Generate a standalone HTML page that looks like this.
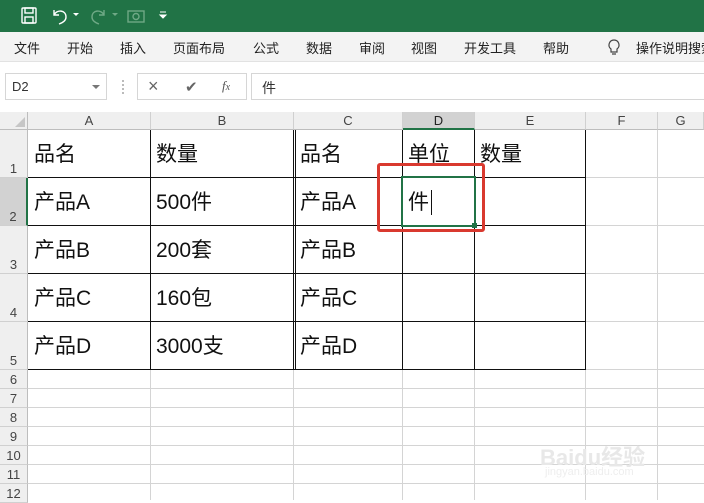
<!DOCTYPE html><html><head><meta charset="utf-8"><style>
*{margin:0;padding:0;box-sizing:border-box}
body{width:704px;height:498px;overflow:hidden;background:#fff;font-family:"Liberation Sans","Noto Sans CJK SC",sans-serif;position:relative}
.a{position:absolute}
.tab{position:absolute;top:38px;font-size:13px;color:#222}
.ch{position:absolute;top:112px;height:18px;font-size:13px;color:#444;text-align:center;line-height:18px;border-right:1px solid #d0d0d0;background:#efefef;border-bottom:1px solid #bdbdbd}
.rh{position:absolute;left:0;width:28px;font-size:13px;color:#444;text-align:center;background:#efefef;border-bottom:1px solid #d0d0d0;border-right:1px solid #bdbdbd;display:flex;align-items:flex-end;justify-content:center;line-height:16px}
.t{position:absolute;font-size:21px;color:#111;line-height:24px}
.vl{position:absolute;width:1px;background:#d4d4d4}
.hl{position:absolute;height:1px;background:#d4d4d4}
.bv{position:absolute;width:1px;background:#111}
.bh{position:absolute;height:1px;background:#111}
</style></head><body>
<div class="a" style="left:0;top:0;width:704px;height:32px;background:#217346"></div>
<svg class="a" style="left:0;top:0" width="180" height="32">
<g fill="none" stroke="#fff" stroke-width="1.4">
<rect x="22" y="8" width="14" height="15" rx="1"/><rect x="25" y="8" width="8" height="5"/><rect x="25" y="17" width="8" height="6"/>
<path d="M54 10v5h5M54 15c3-6 12-5 12 2c0 4-4 6-7 7"/>
</g>
<path d="M73 13l3 3l3-3z" fill="#fff"/>
<g fill="none" stroke="#6fa986" stroke-width="1.4"><path d="M104 10v5h-5M104 15c-3-6-12-5-12 2c0 4 4 6 7 7"/><rect x="128" y="11" width="16" height="11"/><circle cx="136" cy="16.5" r="3"/></g>
<path d="M112 13l3 3l3-3z" fill="#6fa986"/>
<path d="M160 12h6M160 15l3 3l3-3z" stroke="#fff" fill="#fff"/>
</svg>
<div class="a" style="left:0;top:32px;width:704px;height:30px;background:#f3f3f3;border-bottom:1px solid #e2e2e2"></div>
<div class="tab" style="left:14px">文件</div><div class="tab" style="left:67px">开始</div><div class="tab" style="left:120px">插入</div><div class="tab" style="left:173px">页面布局</div><div class="tab" style="left:253px">公式</div><div class="tab" style="left:306px">数据</div><div class="tab" style="left:359px">审阅</div><div class="tab" style="left:411px">视图</div><div class="tab" style="left:464px">开发工具</div><div class="tab" style="left:543px">帮助</div>
<svg class="a" style="left:606px;top:38px" width="16" height="20"><path d="M8 2a5 5 0 0 0-3 9v3h6v-3a5 5 0 0 0-3-9zM6 16h4" fill="none" stroke="#444" stroke-width="1.2"/></svg>
<div class="tab" style="left:636px;white-space:nowrap">操作说明搜索</div>
<div class="a" style="left:0;top:63px;width:704px;height:49px;background:#fff"></div>
<div class="a" style="left:5px;top:73px;width:102px;height:27px;border:1px solid #d6d6d6;font-size:13px;color:#333;line-height:25px;padding-left:6px">D2</div>
<div class="a" style="left:92px;top:85px;border:4px solid transparent;border-top:4px solid #777"></div>
<div class="a" style="left:122px;top:80px;width:2px;height:14px;border-left:2px dotted #bbb"></div>
<div class="a" style="left:137px;top:73px;width:110px;height:27px;border:1px solid #d6d6d6"></div>
<div class="a" style="left:148px;top:76px;font-size:18px;color:#666">×</div>
<div class="a" style="left:185px;top:78px;font-size:15px;color:#666">✔</div>
<div class="a" style="left:222px;top:78px;font-size:13px;color:#555;font-style:italic;font-family:'Liberation Serif',serif">f<span style="font-size:10px">x</span></div>
<div class="a" style="left:251px;top:73px;width:460px;height:27px;border:1px solid #d6d6d6;border-right:none"></div>
<div class="a" style="left:262px;top:78px;font-size:14px;color:#333">件</div>
<div class="a" style="left:0;top:112px;width:28px;height:18px;background:#efefef;border-right:1px solid #bdbdbd;border-bottom:1px solid #bdbdbd"></div>
<svg class="a" style="left:14px;top:116px" width="12" height="12"><path d="M11 1v10h-10z" fill="#c6c6c6"/></svg>
<div class="ch" style="left:28px;width:123px">A</div><div class="ch" style="left:151px;width:143px">B</div><div class="ch" style="left:294px;width:109px">C</div><div class="ch" style="left:403px;width:72px;background:#d2d2d2;border-bottom:2px solid #217346;color:#222">D</div><div class="ch" style="left:475px;width:111px">E</div><div class="ch" style="left:586px;width:72px">F</div><div class="ch" style="left:658px;width:46px">G</div>
<div class="rh" style="top:130px;height:48px">1</div>
<div class="rh" style="top:178px;height:48px;background:#d2d2d2;border-right:2px solid #217346">2</div>
<div class="rh" style="top:226px;height:48px">3</div>
<div class="rh" style="top:274px;height:48px">4</div>
<div class="rh" style="top:322px;height:48px">5</div>
<div class="rh" style="top:370px;height:19px">6</div>
<div class="rh" style="top:389px;height:19px">7</div>
<div class="rh" style="top:408px;height:19px">8</div>
<div class="rh" style="top:427px;height:19px">9</div>
<div class="rh" style="top:446px;height:19px">10</div>
<div class="rh" style="top:465px;height:19px">11</div>
<div class="rh" style="top:484px;height:19px">12</div>
<!-- light grid -->
<div class="vl" style="left:150px;top:370px;height:130px"></div><div class="vl" style="left:293px;top:370px;height:130px"></div><div class="vl" style="left:402px;top:370px;height:130px"></div><div class="vl" style="left:474px;top:370px;height:130px"></div><div class="vl" style="left:585px;top:130px;height:370px"></div><div class="vl" style="left:657px;top:130px;height:370px"></div>
<div class="hl" style="left:586px;top:177px;width:118px"></div><div class="hl" style="left:586px;top:225px;width:118px"></div><div class="hl" style="left:586px;top:273px;width:118px"></div><div class="hl" style="left:586px;top:321px;width:118px"></div>
<div class="hl" style="left:28px;top:388px;width:676px"></div><div class="hl" style="left:28px;top:407px;width:676px"></div><div class="hl" style="left:28px;top:426px;width:676px"></div><div class="hl" style="left:28px;top:445px;width:676px"></div><div class="hl" style="left:28px;top:464px;width:676px"></div><div class="hl" style="left:28px;top:483px;width:676px"></div><div class="hl" style="left:586px;top:369px;width:118px"></div>
<!-- bold borders -->
<div class="bv" style="left:150px;top:130px;height:240px"></div><div class="bv" style="left:293px;top:130px;height:240px"></div><div class="bv" style="left:295px;top:130px;height:240px"></div><div class="bv" style="left:402px;top:130px;height:240px"></div><div class="bv" style="left:474px;top:130px;height:240px"></div><div class="bv" style="left:585px;top:130px;height:240px"></div>
<div class="bh" style="left:28px;top:177px;width:558px"></div><div class="bh" style="left:28px;top:225px;width:558px"></div><div class="bh" style="left:28px;top:273px;width:558px"></div><div class="bh" style="left:28px;top:321px;width:558px"></div><div class="bh" style="left:28px;top:369px;width:558px"></div>
<!-- text -->
<div class="t" style="left:34px;top:143px">品名</div><div class="t" style="left:156px;top:143px">数量</div><div class="t" style="left:300px;top:143px">品名</div><div class="t" style="left:408px;top:143px">单位</div><div class="t" style="left:480px;top:143px">数量</div>
<div class="t" style="left:34px;top:191px">产品A</div><div class="t" style="left:156px;top:191px">500件</div><div class="t" style="left:300px;top:191px">产品A</div>
<div class="t" style="left:34px;top:239px">产品B</div><div class="t" style="left:156px;top:239px">200套</div><div class="t" style="left:300px;top:239px">产品B</div>
<div class="t" style="left:34px;top:287px">产品C</div><div class="t" style="left:156px;top:287px">160包</div><div class="t" style="left:300px;top:287px">产品C</div>
<div class="t" style="left:34px;top:335px">产品D</div><div class="t" style="left:156px;top:335px">3000支</div><div class="t" style="left:300px;top:335px">产品D</div>
<!-- selection -->
<div class="a" style="left:401px;top:176px;width:75px;height:51px;border:2px solid #217346"></div>
<div class="a" style="left:472px;top:223px;width:5px;height:5px;background:#217346"></div>
<div class="t" style="left:408px;top:191px">件</div>
<div class="a" style="left:431px;top:190px;width:1px;height:25px;background:#111"></div>
<div class="a" style="left:377px;top:163px;width:108px;height:69px;border:3px solid #d9392f;border-radius:3px"></div>
<div class="a" style="left:540px;top:440px;font-size:22px;color:#e8e8e8;font-weight:bold">Bai<span>du</span>经验</div>
<div class="a" style="left:545px;top:466px;font-size:11px;color:#eee">jingyan.baidu.com</div>
</body></html>
